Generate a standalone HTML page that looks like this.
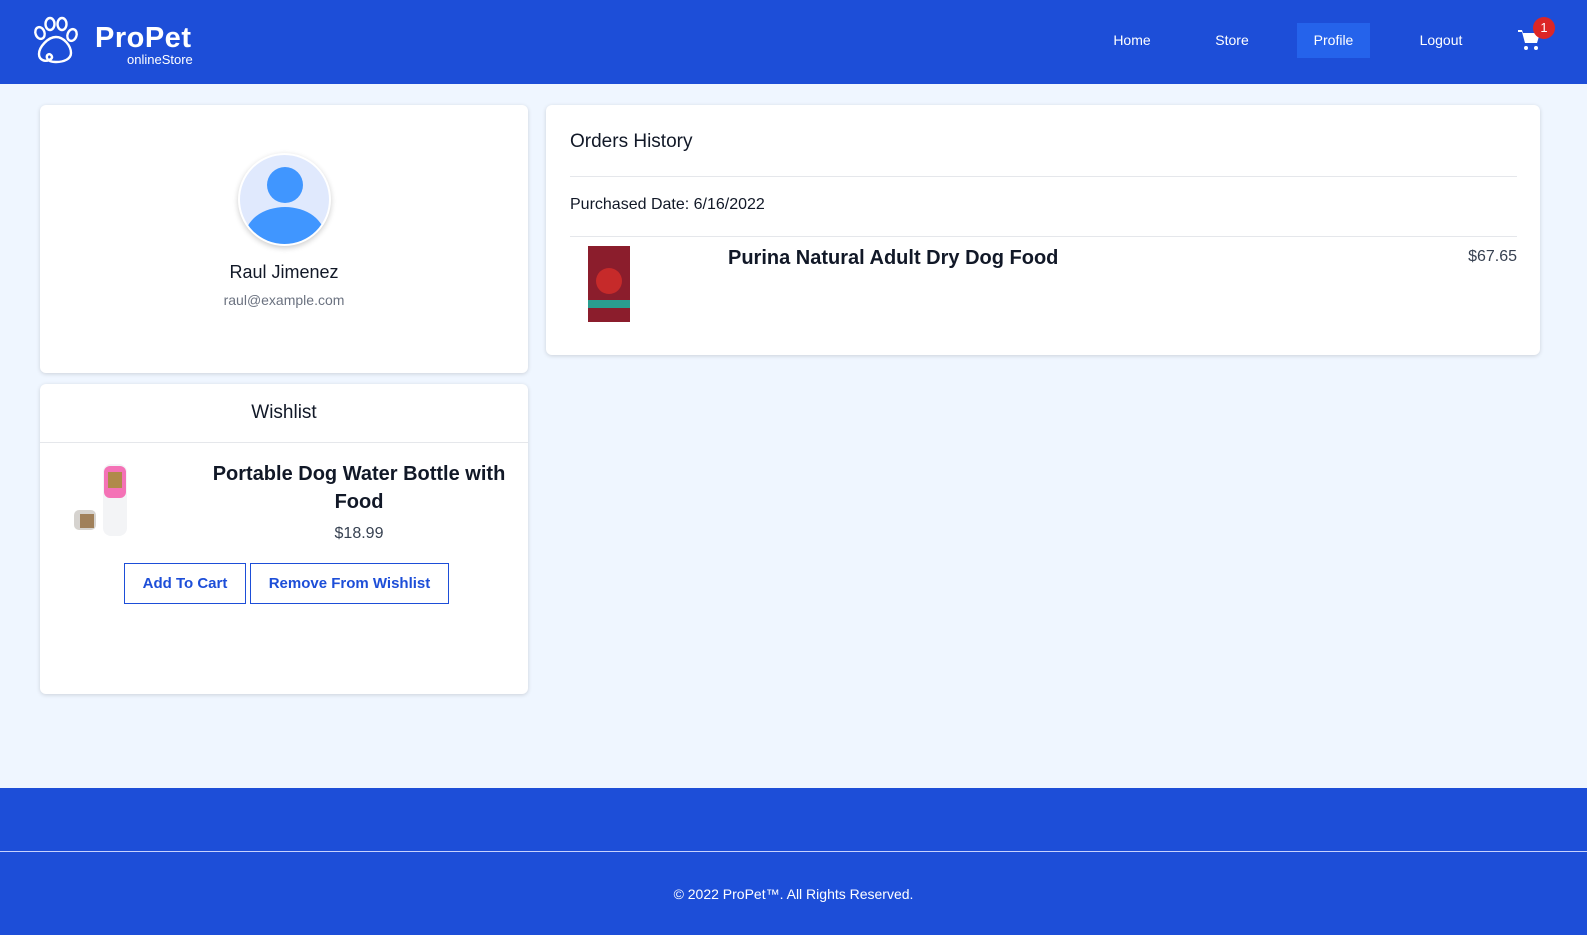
<!DOCTYPE html>
<html><head><meta charset="utf-8"><style>
*{box-sizing:border-box;margin:0;padding:0}
body{width:1587px;height:947px;background:#fff;font-family:"Liberation Sans",sans-serif;position:relative;overflow:hidden;color:#111827}
.hdr{position:absolute;left:0;top:0;width:1587px;height:84px;background:#1d4ed8}
.main{position:absolute;left:0;top:84px;width:1587px;height:704px;background:#eff6ff}
.card{position:absolute;background:#fff;border-radius:6px;box-shadow:0 1px 4px rgba(0,0,0,.15)}
.nav{position:absolute;top:23px;height:35px;line-height:35px;color:#fff;font-size:14px;text-align:center}
.ftr{position:absolute;left:0;top:788px;width:1587px;height:147px;background:#1d4ed8}
.btn{position:absolute;top:563px;height:41px;border:1px solid #1d4ed8;color:#1d4ed8;font-size:15px;line-height:39px;text-align:center;background:#fff;font-weight:bold}
</style></head><body>
<div class="hdr">
<svg style="position:absolute;left:31px;top:15px" width="50" height="50" viewBox="0 0 50 50" fill="none" stroke="#fff" stroke-width="2.4">
<ellipse cx="9" cy="18" rx="4.5" ry="6" transform="rotate(-20 9 18)"/>
<ellipse cx="19" cy="9" rx="4.5" ry="6"/>
<ellipse cx="31" cy="9" rx="4.5" ry="6"/>
<ellipse cx="41" cy="20" rx="4.5" ry="6" transform="rotate(20 41 20)"/>
<path d="M25 22c-8 0-17 10-17 17 0 6 6 8 10 6 3-1 4-3 2-5s-5 0-4 3c1 3 5 4 9 4 8 0 15-3 15-9 0-7-7-16-15-16z"/>
</svg>
<div style="position:absolute;left:95px;top:22px;color:#fff;font-weight:bold;font-size:29px;letter-spacing:.5px">ProPet</div>
<div style="position:absolute;left:127px;top:52px;color:#fff;font-size:13px">onlineStore</div>
<div class="nav" style="left:1100px;width:64px">Home</div>
<div class="nav" style="left:1200px;width:64px">Store</div>
<div class="nav" style="left:1297px;width:73px;background:#2563eb">Profile</div>
<div class="nav" style="left:1405px;width:72px">Logout</div>
<svg style="position:absolute;left:1518px;top:29px" width="24" height="22" viewBox="0 0 24 22" fill="#fff"><path d="M0 1h4l1 3h17l-3 10H7L4 3H0z"/><circle cx="8" cy="19" r="2"/><circle cx="18" cy="19" r="2"/></svg>
<div style="position:absolute;left:1533px;top:17px;width:22px;height:22px;border-radius:50%;background:#dc2626;color:#fff;font-size:13px;text-align:center;line-height:22px">1</div>
</div>
<div class="main"></div>
<div class="card" style="left:40px;top:105px;width:488px;height:268px">
<div style="position:absolute;left:198px;top:48px;width:93px;height:93px;border-radius:50%;background:#e0e9fd;overflow:hidden;box-shadow:0 2px 6px rgba(0,0,0,.2);border:2px solid #fff">
<div style="position:absolute;left:27px;top:12px;width:36px;height:36px;border-radius:50%;background:#4096ff"></div>
<div style="position:absolute;left:5px;top:52px;width:80px;height:60px;border-radius:50%;background:#4096ff"></div>
</div>
<div style="position:absolute;left:0;width:488px;top:157px;text-align:center;font-size:18px">Raul Jimenez</div>
<div style="position:absolute;left:0;width:488px;top:187px;text-align:center;font-size:14px;color:#6b7280">raul@example.com</div>
</div>
<div class="card" style="left:40px;top:384px;width:488px;height:310px">
<div style="position:absolute;left:0;width:488px;top:18px;text-align:center;font-size:19px">Wishlist</div>
<div style="position:absolute;left:0;width:488px;top:58px;border-top:1px solid #e5e7eb"></div>
<svg style="position:absolute;left:30px;top:76px" width="64" height="78" viewBox="0 0 64 78"><rect x="33" y="4" width="24" height="72" rx="8" fill="#f3f4f6"/><rect x="34" y="6" width="22" height="32" rx="6" fill="#f472b6"/><rect x="38" y="12" width="14" height="16" fill="#b08a4a"/><rect x="4" y="50" width="22" height="20" rx="5" fill="#d6d3cf"/><rect x="10" y="54" width="14" height="14" fill="#a0805a"/></svg>
<div style="position:absolute;left:160px;width:318px;top:76px;text-align:center;font-size:20px;font-weight:bold;line-height:28px">Portable Dog Water Bottle with Food</div>
<div style="position:absolute;left:160px;width:318px;top:141px;text-align:center;font-size:16px;color:#374151">$18.99</div>
</div>
<div class="btn" style="left:124px;width:122px">Add To Cart</div>
<div class="btn" style="left:250px;width:199px">Remove From Wishlist</div>
<div class="card" style="left:546px;top:105px;width:994px;height:250px">
<div style="position:absolute;left:24px;top:26px;font-size:19px">Orders History</div>
<div style="position:absolute;left:24px;right:23px;top:71px;border-top:1px solid #e5e7eb"></div>
<div style="position:absolute;left:24px;top:91px;font-size:16px">Purchased Date: 6/16/2022</div>
<div style="position:absolute;left:24px;right:23px;top:131px;border-top:1px solid #e5e7eb"></div>
<div style="position:absolute;left:42px;top:141px;width:42px;height:76px;background:#8b1d2c"><div style="position:absolute;left:8px;top:22px;width:26px;height:26px;border-radius:50%;background:#c62a2a"></div><div style="position:absolute;left:0;top:54px;width:42px;height:8px;background:#2a9d8f"></div></div>
<div style="position:absolute;left:182px;top:142px;font-size:20px;font-weight:bold">Purina Natural Adult Dry Dog Food</div>
<div style="position:absolute;right:23px;top:143px;font-size:16px;color:#374151">$67.65</div>
</div>
<div class="ftr">
<div style="position:absolute;left:0;top:63px;width:1587px;border-top:1px solid #c7d2fe"></div>
<div style="position:absolute;left:0;width:1587px;top:98px;text-align:center;color:#fff;font-size:14px">© 2022 ProPet™. All Rights Reserved.</div>
</div>
</body></html>
